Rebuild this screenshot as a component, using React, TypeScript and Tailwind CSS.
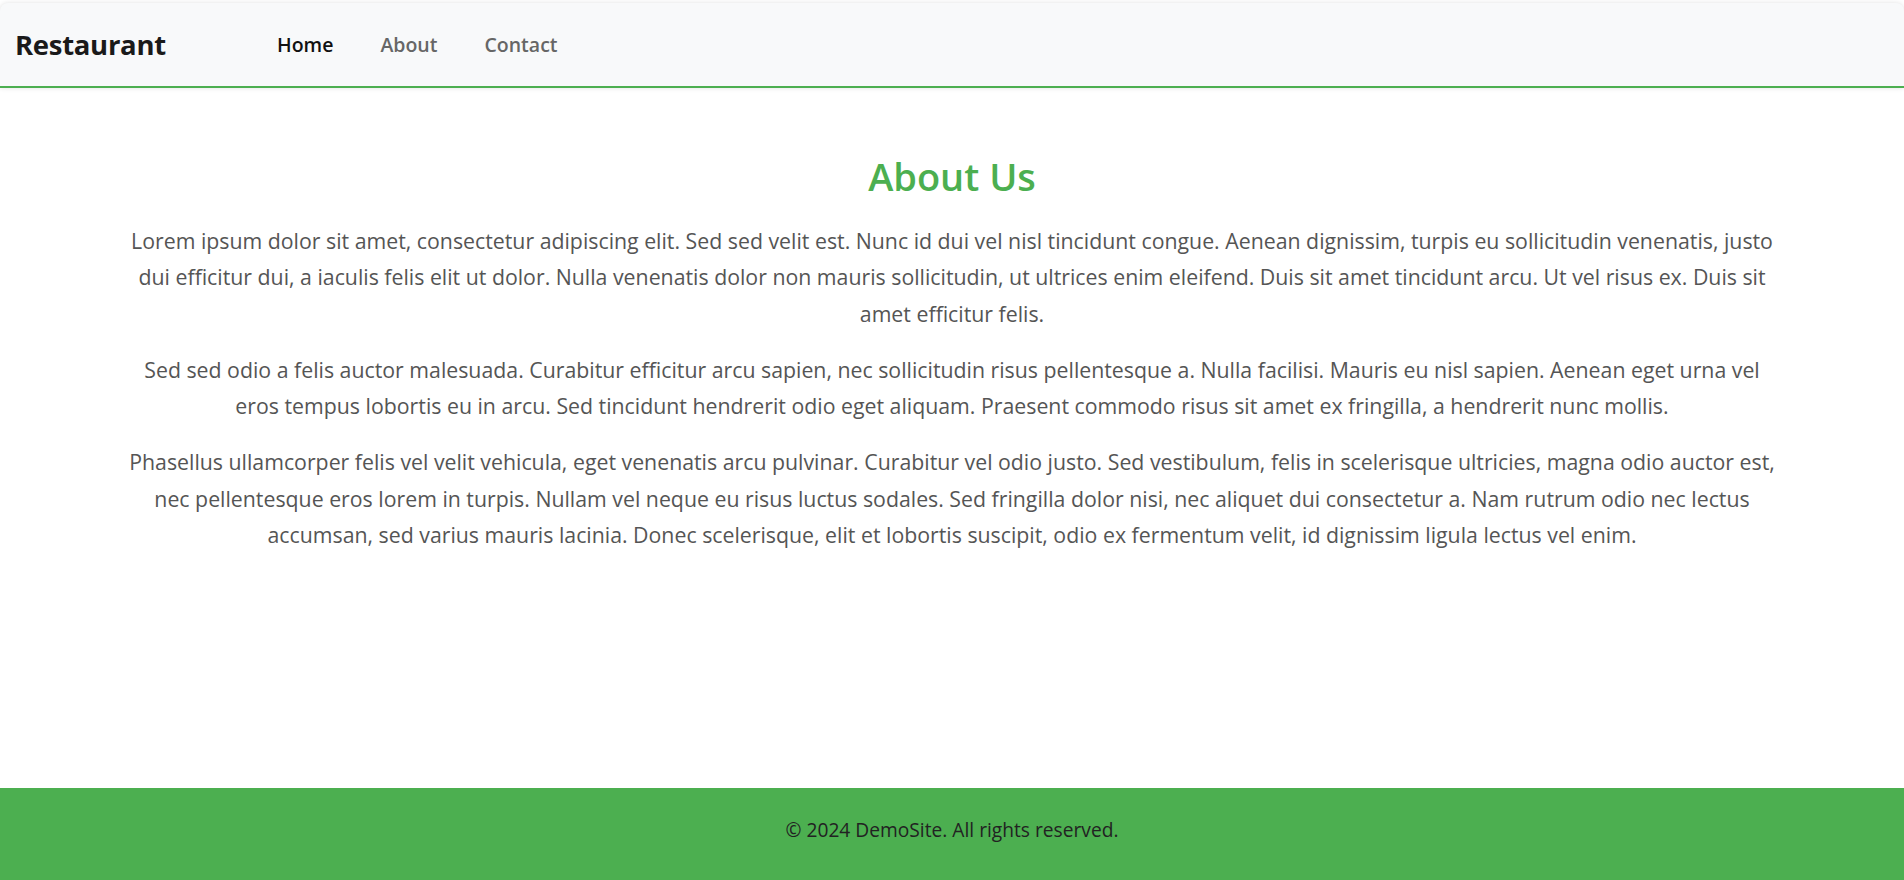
const paragraphs = [
  "Lorem ipsum dolor sit amet, consectetur adipiscing elit. Sed sed velit est. Nunc id dui vel nisl tincidunt congue. Aenean dignissim, turpis eu sollicitudin venenatis, justo dui efficitur dui, a iaculis felis elit ut dolor. Nulla venenatis dolor non mauris sollicitudin, ut ultrices enim eleifend. Duis sit amet tincidunt arcu. Ut vel risus ex. Duis sit amet efficitur felis.",
  "Sed sed odio a felis auctor malesuada. Curabitur efficitur arcu sapien, nec sollicitudin risus pellentesque a. Nulla facilisi. Mauris eu nisl sapien. Aenean eget urna vel eros tempus lobortis eu in arcu. Sed tincidunt hendrerit odio eget aliquam. Praesent commodo risus sit amet ex fringilla, a hendrerit nunc mollis.",
  "Phasellus ullamcorper felis vel velit vehicula, eget venenatis arcu pulvinar. Curabitur vel odio justo. Sed vestibulum, felis in scelerisque ultricies, magna odio auctor est, nec pellentesque eros lorem in turpis. Nullam vel neque eu risus luctus sodales. Sed fringilla dolor nisi, nec aliquet dui consectetur a. Nam rutrum odio nec lectus accumsan, sed varius mauris lacinia. Donec scelerisque, elit et lobortis suscipit, odio ex fermentum velit, id dignissim ligula lectus vel enim.",
];

export default function App() {
  return (
    <div className="flex min-h-screen flex-col bg-white font-['Open_Sans',sans-serif]">
      <nav className="mt-[3px] flex h-[85px] items-center rounded-t-lg border-b-2 border-[#4CAF50] bg-[#f8f9fa] px-[15px] shadow-[0_0_5px_rgba(0,0,0,0.12)]">
        <div className="w-[262px] text-[27.5px] font-bold tracking-[-0.3px] text-[#1a1a1a]">Restaurant</div>
        <ul className="flex items-center gap-[47px] text-[19.5px] font-semibold">
          <li className="text-[#111]">Home</li>
          <li className="text-[#666]">About</li>
          <li className="text-[#666]">Contact</li>
        </ul>
      </nav>

      <main className="flex-1 px-[120px] pt-[66px] text-center">
        <h1 className="mb-[23px] text-[38px] font-semibold leading-[1.2] text-[#4CAF50]">About Us</h1>
        {paragraphs.map((text, i) => (
          <p key={i} className="mb-[19.5px] text-[21.3px] leading-[36.5px] text-[#555]">
            {text}
          </p>
        ))}
      </main>

      <footer className="h-[92px] bg-[#4CAF50] pt-[28px] text-center text-[19.2px] text-[#222]">
        © 2024 DemoSite. All rights reserved.
      </footer>
    </div>
  );
}
